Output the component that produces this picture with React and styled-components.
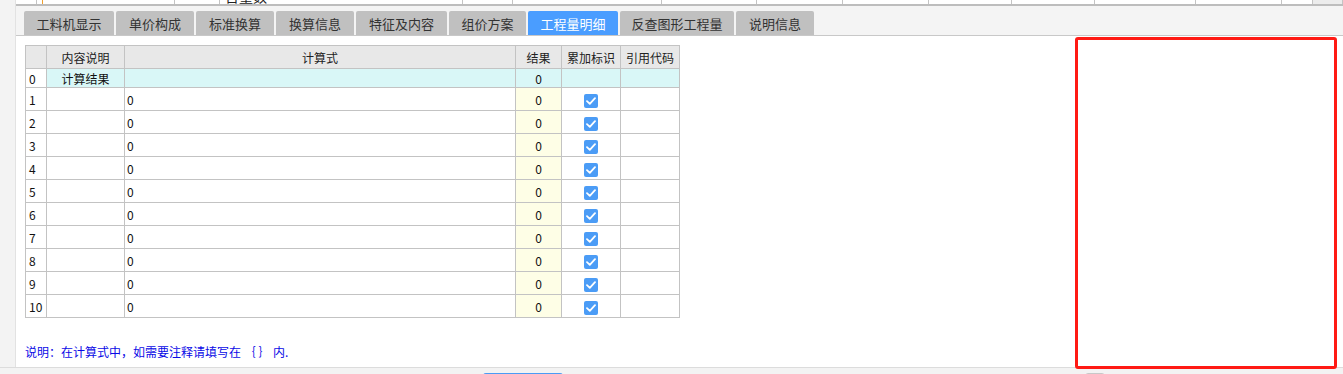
import React from "react";
import styled, { createGlobalStyle } from "styled-components";

const Global = createGlobalStyle`
  html, body { margin: 0; padding: 0; background: #f3f3f3; }
  body { font-family: "Noto Sans CJK SC", "Noto Sans", sans-serif; overflow: hidden; }
  #root { width: 1343px; height: 374px; }
`;

const Page = styled.div`
  position: relative;
  width: 1343px;
  height: 374px;
  display: flex;
  flex-direction: column;
  overflow: hidden;
`;

const Body = styled.div`
  display: flex;
  height: 367px;
`;

const LeftStrip = styled.div`
  width: 15px;
  background: #f3f3f3;
  border-right: 1px solid #e2e2e2;
`;

const Main = styled.div`
  flex: 1;
  display: flex;
  flex-direction: column;
  min-width: 0;
`;

const TopStrip = styled.div`
  height: 4px;
  display: flex;
  background: #fff;
  overflow: hidden;
  border-bottom: 2px solid #bdbdbd;
`;

const TopCell = styled.div`
  flex: 0 0 ${(p) => p.$w}px;
  height: 4px;
  border-right: 1px solid ${(p) => (p.$accent ? "#f0a030" : "#c4c4c4")};
  box-sizing: border-box;
  overflow: hidden;
  background: ${(p) => (p.$muted ? "#ececec" : "#fff")};
`;

const TopText = styled.span`
  display: block;
  margin-top: -12px;
  padding-left: 5px;
  font-size: 14px;
  line-height: 16px;
  color: #222;
  white-space: nowrap;
`;

const TabBar = styled.div`
  height: 29px;
  background: #f4f4f4;
  border-bottom: 1px solid #c8c8c8;
  display: flex;
  align-items: flex-end;
  padding-left: 8px;
  gap: 2px;
`;

const Tab = styled.div`
  width: ${(p) => p.$w}px;
  height: 24px;
  border-radius: 2px 2px 0 0;
  background: ${(p) => (p.$active ? "#4a9dff" : "#c0c0c0")};
  color: ${(p) => (p.$active ? "#fff" : "#333")};
  font-size: 13px;
  display: flex;
  align-items: center;
  justify-content: center;
  white-space: nowrap;
`;

const Content = styled.div`
  flex: 1;
  background: #fff;
  padding: 9px 0 0 9px;
  display: flex;
  flex-direction: column;
  align-items: flex-start;
`;

const Grid = styled.table`
  border-collapse: collapse;
  table-layout: fixed;
  width: 655px;
  font-size: 12px;
  color: #111;
  td, th {
    border: 1px solid #c3c3c3;
    padding: 0;
    overflow: hidden;
    white-space: nowrap;
  }
`;

const HeadCell = styled.th`
  height: 22px;
  background: #e8e8e8;
  font-weight: normal;
  text-align: center;
  color: #222;
`;

const NumCell = styled.td`
  background: #fff;
  text-align: left;
  padding-left: 3px !important;
`;

const Cell = styled.td`
  height: ${(p) => (p.$short ? 18 : 22)}px;
  background: ${(p) => (p.$total ? "#d9f7f7" : p.$result ? "#fefee6" : "#fff")};
  text-align: ${(p) => (p.$center ? "center" : "left")};
  padding-left: ${(p) => (p.$center ? 0 : 2)}px !important;
`;

const Check = styled.span`
  display: inline-flex;
  width: 14px;
  height: 14px;
  border-radius: 2px;
  background: #4b9cf6;
  vertical-align: middle;
  align-items: center;
  justify-content: center;
`;

const Note = styled.div`
  margin-top: 27px;
  font-size: 12px;
  line-height: 14px;
  color: #0a0ae6;
  white-space: pre;
`;

const Footer = styled.div`
  height: 6px;
  border-top: 1px solid #dcdcdc;
  background: #f3f3f3;
  position: relative;
`;

const FooterTab = styled.div`
  position: absolute;
  top: 5px;
  left: ${(p) => p.$x}px;
  width: ${(p) => p.$w}px;
  height: 6px;
  border-radius: 3px 3px 0 0;
  background: ${(p) => (p.$blue ? "#4a9bf5" : "#fff")};
  border: ${(p) => (p.$blue ? "none" : "1px solid #c8c8c8")};
  box-sizing: border-box;
`;

const Highlight = styled.div`
  position: absolute;
  left: 1075px;
  top: 37px;
  width: 262px;
  height: 332px;
  border: 3px solid #ff1a14;
  border-radius: 3px;
  box-sizing: border-box;
  pointer-events: none;
`;

const topCells = [
  { w: 21 },
  { w: 6, accent: true },
  { w: 132 },
  { w: 45 },
  { w: 243, text: "含量数" },
  { w: 50 },
  { w: 149 },
  { w: 95 },
  { w: 86 },
  { w: 86 },
  { w: 83 },
  { w: 83 },
  { w: 101 },
  { w: 86 },
  { w: 31 },
  { w: 30, muted: true },
];

const tabs = [
  { label: "工料机显示", w: 90 },
  { label: "单价构成", w: 78 },
  { label: "标准换算", w: 78 },
  { label: "换算信息", w: 78 },
  { label: "特征及内容", w: 91 },
  { label: "组价方案", w: 77 },
  { label: "工程量明细", w: 90, active: true },
  { label: "反查图形工程量", w: 114 },
  { label: "说明信息", w: 78 },
];

const rows = Array.from({ length: 10 }, (_, i) => i + 1);

function CheckMark() {
  return (
    <Check>
      <svg width="10" height="8" viewBox="0 0 10 8">
        <path d="M1 4.2 L3.8 6.8 L9 1.2" fill="none" stroke="#fff" strokeWidth="1.8" strokeLinecap="round" strokeLinejoin="round" />
      </svg>
    </Check>
  );
}

export default function App() {
  return (
    <Page>
      <Global />
      <Body>
        <LeftStrip />
        <Main>
          <TopStrip>
            {topCells.map((c, i) => (
              <TopCell key={i} $w={c.w} $accent={c.accent} $muted={c.muted}>
                {c.text && <TopText>{c.text}</TopText>}
              </TopCell>
            ))}
          </TopStrip>
          <TabBar>
            {tabs.map((t) => (
              <Tab key={t.label} $w={t.w} $active={t.active}>
                {t.label}
              </Tab>
            ))}
          </TabBar>
          <Content>
            <Grid>
              <colgroup>
                <col style={{ width: 21 }} />
                <col style={{ width: 78 }} />
                <col style={{ width: 391 }} />
                <col style={{ width: 46 }} />
                <col style={{ width: 59 }} />
                <col style={{ width: 59 }} />
              </colgroup>
              <thead>
                <tr>
                  <HeadCell />
                  <HeadCell>内容说明</HeadCell>
                  <HeadCell>计算式</HeadCell>
                  <HeadCell>结果</HeadCell>
                  <HeadCell>累加标识</HeadCell>
                  <HeadCell>引用代码</HeadCell>
                </tr>
              </thead>
              <tbody>
                <tr>
                  <NumCell>0</NumCell>
                  <Cell $short $total $center>计算结果</Cell>
                  <Cell $short $total />
                  <Cell $short $total $center>0</Cell>
                  <Cell $short $total />
                  <Cell $short $total />
                </tr>
                {rows.map((n) => (
                  <tr key={n}>
                    <NumCell>{n}</NumCell>
                    <Cell />
                    <Cell>0</Cell>
                    <Cell $result $center>0</Cell>
                    <Cell $center>
                      <CheckMark />
                    </Cell>
                    <Cell />
                  </tr>
                ))}
              </tbody>
            </Grid>
            <Note>说明：在计算式中，如需要注释请填写在 ｛ ｝ 内.</Note>
          </Content>
        </Main>
      </Body>
      <Footer>
        <FooterTab $blue $x={483} $w={80} />
        <FooterTab $x={1085} $w={20} />
      </Footer>
      <Highlight />
    </Page>
  );
}
